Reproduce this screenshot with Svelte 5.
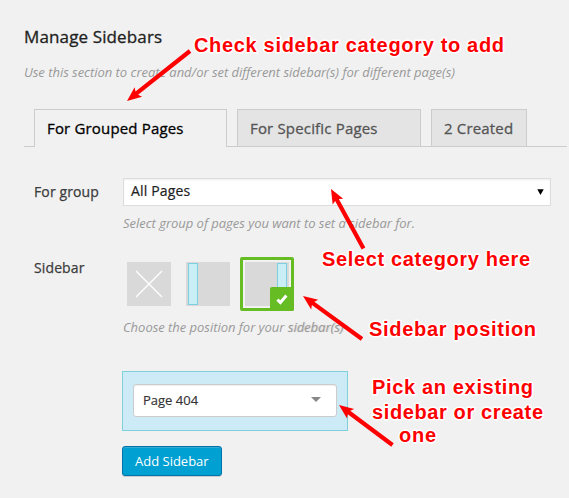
<script>
  const tabs = [
    { label: 'For Grouped Pages', width: 193, active: true },
    { label: 'For Specific Pages', width: 184 },
    { label: '2 Created', width: 96 }
  ];

  // Tip and tail of every arrow, each drawn over the form.
  const arrows = [
    { tip: [127, 101], tail: [190, 51] },
    { tip: [331, 189], tail: [363.5, 248.5] },
    { tip: [303, 296], tail: [362, 339] },
    { tip: [339, 405], tail: [392.5, 445] }
  ].map(({ tip, tail }) => {
    const dx = tip[0] - tail[0];
    const dy = tip[1] - tail[1];
    return {
      x: tip[0],
      y: tip[1],
      length: Math.hypot(dx, dy),
      angle: (Math.atan2(dy, dx) * 180) / Math.PI
    };
  });

  const notes = [
    { x: 194, y: 52, width: 310, text: 'Check sidebar category to add' },
    { x: 322, y: 266, width: 208, text: 'Select category here' },
    { x: 369, y: 336, width: 167, text: 'Sidebar position' },
    { x: 372, y: 394, width: 161, text: 'Pick an existing' },
    { x: 372, y: 419, width: 171, text: 'sidebar or create' },
    { x: 399, y: 442, width: 37, text: 'one' }
  ];
</script>

<main>
  <h1>Manage Sidebars</h1>
  <p class="intro">Use this section to create and/or set different sidebar(s) for different page(s)</p>

  <nav>
    {#each tabs as tab}
      <button class="tab" class:active={tab.active} style="width: {tab.width}px">{tab.label}</button>
    {/each}
  </nav>

  <section class="row group">
    <span class="label">For group</span>
    <div class="field">
      <div class="select">
        <span>All Pages</span>
        <svg width="7" height="6" viewBox="0 0 7 6"><path d="M.3 .2h6.4L3.5 6z" fill="#000" /></svg>
      </div>
      <p class="hint h1">Select group of pages you want to set a sidebar for.</p>
    </div>
  </section>

  <section class="row position">
    <span class="label">Sidebar</span>
    <div class="field">
      <div class="options">
        <div class="option">
          <svg width="44" height="44" viewBox="0 0 44 44"><path d="M9 9l26 26M35 9L9 35" stroke="#fff" stroke-width="1.3" /></svg>
        </div>
        <div class="option left"><i></i></div>
        <div class="option right selected">
          <i></i>
          <span class="badge">
            <svg width="12" height="11" viewBox="0 0 12 11"><path d="M1.4 5.6l3 3L10.4 1.6" fill="none" stroke="#fff" stroke-width="3" /></svg>
          </span>
        </div>
      </div>
      <p class="hint h2">Choose the position for your <span class="blurred">sidebar(s)</span></p>
    </div>
  </section>

  <div class="picker">
    <div class="dropdown">
      <span>Page 404</span>
      <svg width="10" height="5" viewBox="0 0 10 5"><path d="M0 0h10L5 5z" fill="#888" /></svg>
    </div>
  </div>
  <button class="add">Add Sidebar</button>

  <svg class="annotations" width="569" height="498" viewBox="0 0 569 498">
    {#each arrows as a}
      <g transform="translate({a.x} {a.y}) rotate({a.angle})" fill="red">
        <path d="M0 0L-14.5 -6L-12.5 -2.1H{-a.length}V2.1H-12.5L-14.5 6Z" />
      </g>
    {/each}
    {#each notes as n}
      <text x={n.x} y={n.y} textLength={n.width}>{n.text}</text>
    {/each}
  </svg>
</main>

<style>
  :global(body) { margin: 0; background: #f1f1f1; }
  main {
    position: relative;
    box-sizing: border-box;
    width: 569px;
    height: 498px;
    overflow: hidden;
    padding: 26px 2px 0 24px;
    background: #f1f1f1;
    color: #444;
    font-family: "Open Sans", "Noto Sans", sans-serif;
  }
  h1, p { margin: 0; white-space: nowrap; }
  h1 { font-size: 17px; line-height: 22px; font-weight: 400; color: #222; letter-spacing: .13px; -webkit-text-stroke: .3px; }
  .intro { margin-top: 14px; }
  .intro, .hint { font-size: 13px; line-height: 20px; font-style: italic; color: #999; letter-spacing: -.025px; }
  button { font-family: inherit; margin: 0; box-sizing: border-box; text-align: left; white-space: nowrap; }
  nav { display: flex; gap: 10px; height: 38px; margin-top: 27px; padding-left: 10px; box-sizing: border-box; border-bottom: 1px solid #ccc; }
  .tab { height: 37px; padding: 0 12px 0; border: 1px solid #ccc; border-bottom: 0; background: #e4e4e4; color: #555; font-size: 15px; font-weight: 400; letter-spacing: .17px; -webkit-text-stroke: .3px; line-height: 36px; }
  .tab.active { height: 38px; padding-bottom: 1px; background: #f1f1f1; color: #000; }
  .row { display: flex; padding-left: 10px; }
  .label { width: 89px; flex: none; font-size: 14px; line-height: 20px; color: #3c3c3c; letter-spacing: .12px; -webkit-text-stroke: .25px; }
  .group { margin-top: 31px; height: 56px; }
  .group .label { padding-top: 4px; }
  .select { display: flex; align-items: center; justify-content: space-between; box-sizing: border-box; width: 428px; height: 28px; padding: 0 6px 0 7px; border: 1px solid #ddd; background: #fff; box-shadow: inset 0 1px 2px rgba(0,0,0,.07); font-size: 14px; color: #222; }
  .select span { line-height: 20px; padding-bottom: 2px; letter-spacing: .15px; -webkit-text-stroke: .2px; }
  .h1 { margin-top: 7px; }
  .position { margin-top: 23px; height: 80px; }
  .position .label { padding-top: 1px; }
  .options { display: flex; gap: 5px; height: 54px; margin-left: -1px; }
  .option { position: relative; box-sizing: border-box; display: flex; width: 54px; height: 54px; padding: 2px; border: 3px solid transparent; background: #d9d9d9 content-box; }
  .option i { box-sizing: border-box; width: 10px; height: 42px; margin: 1px 2px; border: 1px solid #7dd0df; background: #c9eef5; }
  .option.right { justify-content: flex-end; }
  .option.selected { border-color: #65bc23; border-radius: 2px; }
  .badge { position: absolute; right: -3px; bottom: -3px; display: flex; align-items: center; justify-content: center; width: 24px; height: 24px; border-radius: 2px; background: #65bc23; }
  .h2 { margin-top: 6px; }
  .blurred { text-shadow: 1px 0 1px #ccc; }
  .picker { box-sizing: border-box; width: 226px; height: 60px; margin: 34px 0 0 98px; padding: 12px 10px; border: 1px solid #7ed0da; background: #cdebf6; }
  .dropdown { display: flex; align-items: center; justify-content: space-between; box-sizing: border-box; height: 33px; padding: 0 15px 1px 9px; border: 1px solid #ccc; border-radius: 3px; background: #fff; font-size: 13px; color: #333; box-shadow: inset 0 1px 1px #eee; }
  .dropdown span { -webkit-text-stroke: .15px; }
  .dropdown svg { margin-bottom: 1px; }
  .add { display: block; width: 100px; height: 30px; margin: 15px 0 0 98px; padding: 0 12px; border: 1px solid #0073aa; border-radius: 3px; background: #00a0d2; color: #fff; font-size: 13px; line-height: 28px; box-shadow: inset 0 1px 0 #35a9d0, 0 1px 0 #ccc; }
  .annotations { position: absolute; inset: 0; pointer-events: none; }
  text { font: bold 20px "Liberation Sans", Arial, sans-serif; fill: red; stroke: #fff; stroke-width: 3px; stroke-linejoin: round; paint-order: stroke; }
</style>
